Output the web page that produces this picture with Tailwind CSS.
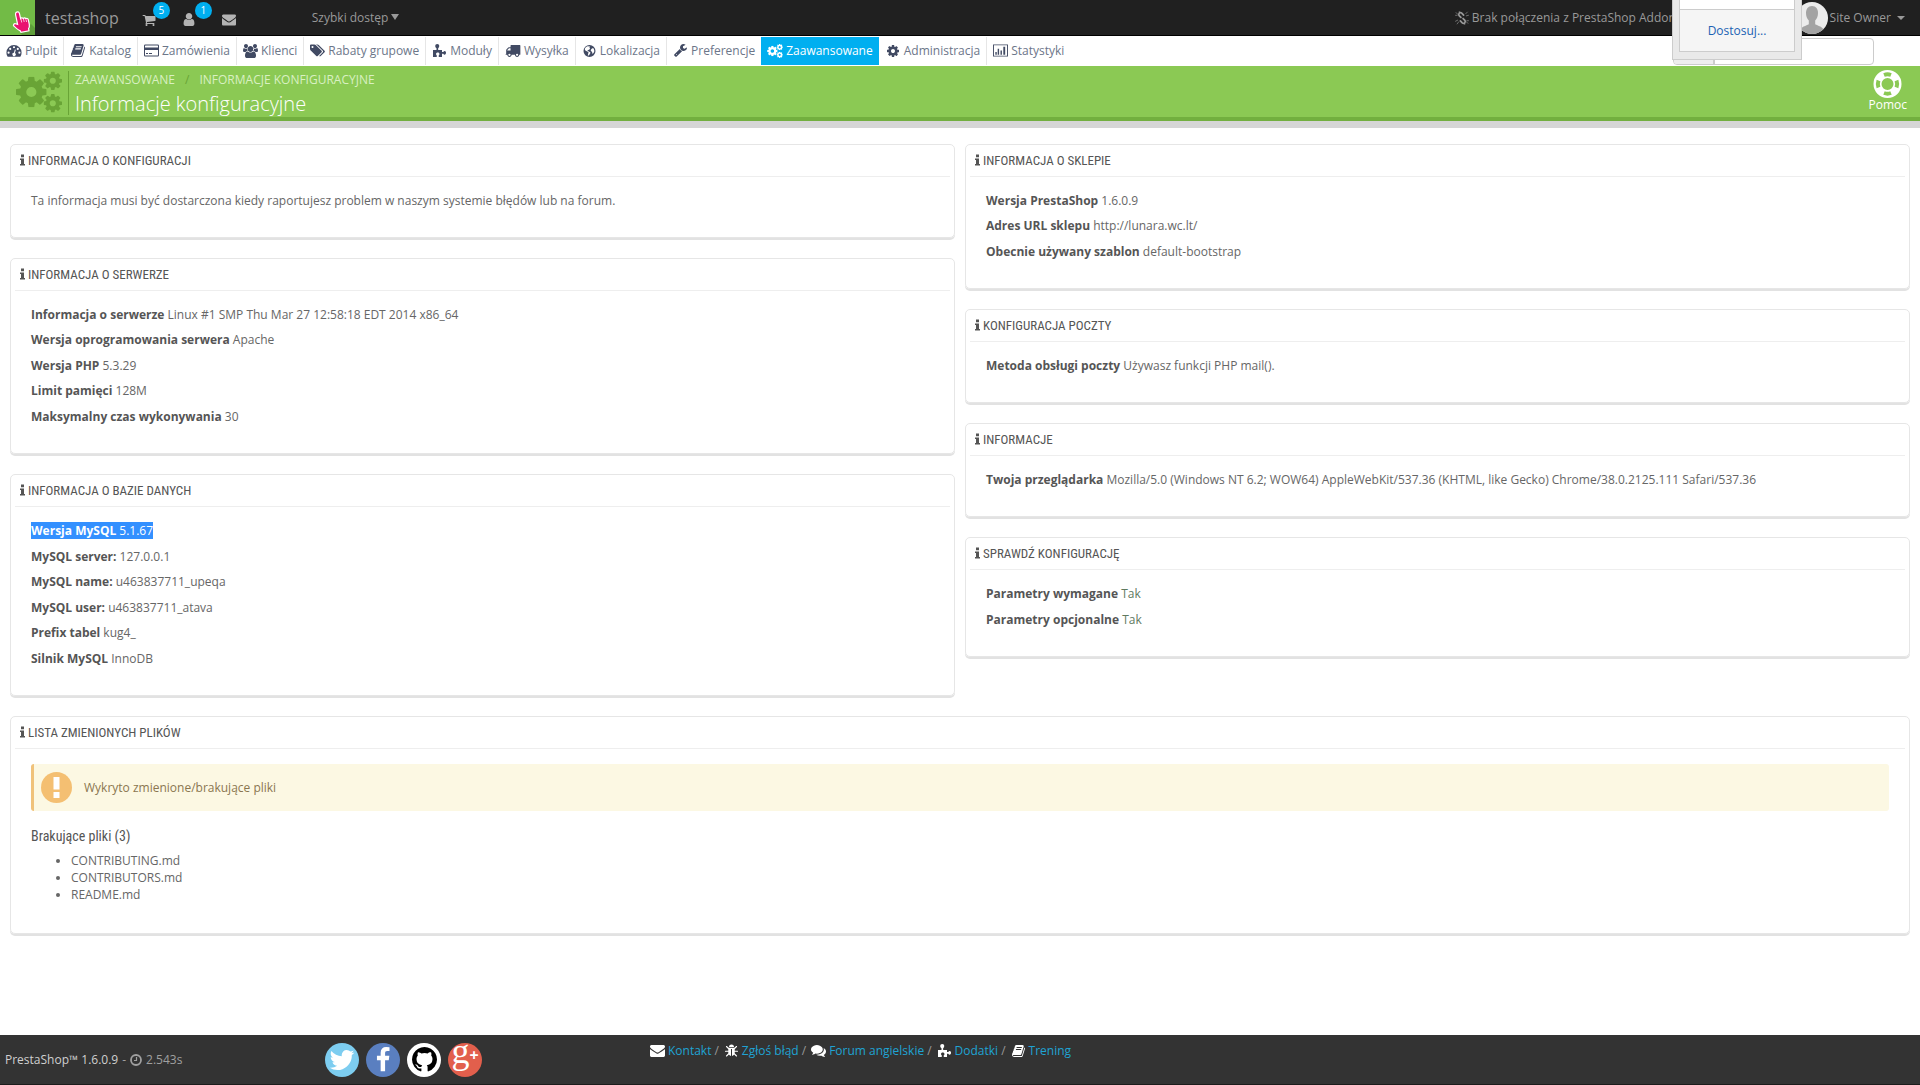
<!DOCTYPE html>
<html lang="pl">
<head>
    <meta charset="UTF-8">
    <meta name="viewport" content="width=device-width, initial-scale=1.0">
    <title>Informacje konfiguracyjne - testashop</title>
    <script src="https://cdn.jsdelivr.net/npm/@tailwindcss/browser@4"></script>
</head>
<body class="min-h-screen flex flex-col bg-white font-['Open_Sans',sans-serif] text-[12px] leading-[17px] text-[#666]">

    <!-- Icon sprite -->
    <svg class="hidden" xmlns="http://www.w3.org/2000/svg">
        <symbol id="i-cart" viewBox="0 0 1792 1792"><path d="M704 1536q0 52-38 90t-90 38-90-38-38-90 38-90 90-38 90 38 38 90zm896 0q0 52-38 90t-90 38-90-38-38-90 38-90 90-38 90 38 38 90zm128-1088v512q0 24-16.500 42.500t-40.500 21.500l-1044 122q13 60 13 70 0 16-24 64h920q26 0 45 19t19 45-19 45-45 19h-1024q-26 0-45-19t-19-45q0-11 8-31.500t16-36 21.500-40 15.500-29.500l-177-823h-204q-26 0-45-19t-19-45 19-45 45-19h256q16 0 28.500 6.500t19.500 15.500 13 24.500 8 26 5.500 29.500 4.500 26h1201q26 0 45 19t19 45z"/></symbol>
        <symbol id="i-user" viewBox="256 128 1280 1536"><path d="M1536 1399q0 109-62.500 187t-150.500 78h-854q-88 0-150.500-78t-62.500-187q0-85 8.500-160.500t31.500-152 58.500-131 94-89 134.500-34.500q131 128 313 128t313-128q76 0 134.500 34.500t94 89 58.500 131 31.500 152 8.500 160.500zm-256-887q0 159-112.500 271.500t-271.500 112.500-271.500-112.500-112.500-271.500 112.500-271.500 271.500-112.500 271.500 112.500 112.500 271.500z"/></symbol>
        <symbol id="i-envelope" viewBox="0 256 1792 1408"><path d="M1792 710v794q0 66-47 113t-113 47h-1472q-66 0-113-47t-47-113v-794q44 49 101 87 362 246 497 345 57 42 92.500 65.500t94.500 48 110 24.500h2q51 0 110-24.500t94.500-48 92.500-65.500q170-123 498-345 57-39 100-87zm0-294q0 79-49 151t-122 123q-376 261-468 325-10 7-42.500 31t-54 38.500-52 32.500-57.500 27-50 9h-2q-23 0-50-9t-57.500-27-52-32.500-54-38.500-42.500-31q-91-64-262-182.500t-205-142.500q-62-42-117-115.500t-55-136.500q0-78 41.500-130t118.500-52h1472q65 0 112.500 47t47.500 113z"/></symbol>
        <symbol id="i-dashboard" viewBox="0 0 28 24"><path fill-rule="evenodd" d="M14 2a14 14 0 0 1 14 14c0 2.500-.7 4.900-2 7q-.4.600-1 .600H3q-.6 0-1-.6a14 14 0 0 1-2-7A14 14 0 0 1 14 2zM4 14a2 2 0 1 0 0 4 2 2 0 0 0 0-4zm3-7a2 2 0 1 0 0 4 2 2 0 0 0 0-4zm7-3a2 2 0 1 0 0 4 2 2 0 0 0 0-4zm7 3a2 2 0 1 0 0 4 2 2 0 0 0 0-4zm3 7a2 2 0 1 0 0 4 2 2 0 0 0 0-4zm-8.500-3.700-1.600 6a3 3 0 1 0 1.900.5l1.600-6z"/></symbol>
        <symbol id="i-book" viewBox="0 128 1792 1536"><path d="M1703 478q40 57 18 129l-275 906q-19 64-76.500 107.500t-122.500 43.500h-923q-77 0-148.500-53.500t-99.500-131.500q-24-67-2-127 0-4 3-27t4-37q1-8-3-21.500t-3-19.500q2-11 8-21t16.500-23.500 16.500-23.500q23-38 45-91.500t30-91.500q3-10 .5-30t-.5-28q3-11 17-28t17-23q21-36 42-92t25-90q1-9-2.500-32t.5-28q4-13 22-30.500t22-22.500q19-26 42.500-84.500t27.500-96.500q1-8-3-25.500t-2-26.500q2-8 9-18t18-23 17-21q8-12 16.500-30.500t15-35 16-36 19.500-32 26.500-23.500 36-11.500 47.500 5.500l-1 3q38-9 51-9h761q74 0 114 56t18 130l-274 906q-36 119-71.500 153.500t-128.500 34.500h-869q-27 0-38 15-11 16-1 43 24 70 144 70h923q29 0 56-15.500t35-41.500l300-987q7-22 5-57 38 15 59 43zm-1064 2q-4 13 2 22.500t20 9.500h608q13 0 25.500-9.500t16.500-22.500l21-64q4-13-2-22.500t-20-9.500h-608q-13 0-25.500 9.500t-16.500 22.500zm-83 256q-4 13 2 22.500t20 9.500h608q13 0 25.500-9.500t16.500-22.500l21-64q4-13-2-22.500t-20-9.500h-608q-13 0-25.500 9.500t-16.500 22.500z"/></symbol>
        <symbol id="i-card" viewBox="0 0 30 24"><path fill-rule="evenodd" d="M2.500 0h25A2.500 2.500 0 0 1 30 2.500v19a2.500 2.500 0 0 1-2.500 2.500h-25A2.500 2.500 0 0 1 0 21.500v-19A2.500 2.500 0 0 1 2.500 0zM2 3v3h26V3q0-1-1-1H3Q2 2 2 3zm0 8v10q0 1 1 1h24q1 0 1-1V11zm2 6h4v2H4zm6 0h6v2h-6z"/></symbol>
        <symbol id="i-users" viewBox="0 128 1920 1536"><path d="M593 896q-162 5-265 128h-134q-82 0-138-40.500t-56-118.500q0-353 124-353 6 0 43.500 21t97.500 42.500 119 21.500q67 0 133-23-5 37-5 66 0 139 81 256zm1071 637q0 120-73 189.500t-194 69.500h-874q-121 0-194-69.500t-73-189.500q0-53 3.500-103.500t14-109 26.500-108.500 43-97.500 62-81 85.500-53.500 111.500-20q10 0 43 21.500t73 48 107 48 135 21.500 135-21.500 107-48 73-48 43-21.500q61 0 111.500 20t85.500 53.500 62 81 43 97.500 26.500 108.500 14 109 3.500 103.500zm-1024-1277q0 106-75 181t-181 75-181-75-75-181 75-181 181-75 181 75 75 181zm704 384q0 159-112.500 271.500t-271.500 112.500-271.500-112.500-112.500-271.500 112.500-271.500 271.500-112.500 271.500 112.500 112.500 271.500zm576 225q0 78-56 118.500t-138 40.500h-134q-103-123-265-128 81-117 81-256 0-29-5-66 66 23 133 23 59 0 119-21.500t97.500-42.500 43.500-21q124 0 124 353zm-128-609q0 106-75 181t-181 75-181-75-75-181 75-181 181-75 181 75 75 181z"/></symbol>
        <symbol id="i-tags" viewBox="0 128 1920 1536"><path d="M448 448q0-53-37.500-90.500t-90.500-37.500-90.500 37.500-37.500 90.500 37.500 90.500 90.500 37.500 90.500-37.500 37.500-90.500zm1067 576q0 53-37 90l-491 492q-39 37-91 37-53 0-90-37l-715-716q-38-37-64.500-101t-26.500-117v-416q0-52 38-90t90-38h416q53 0 117 26.500t102 64.500l715 714q37 39 37 91zm384 0q0 53-37 90l-491 492q-39 37-91 37-36 0-59-14t-53-45l470-470q37-37 37-90 0-52-37-91l-715-714q-38-38-102-64.500t-117-26.500h224q53 0 117 26.500t102 64.500l715 714q37 39 37 91z"/></symbol>
        <symbol id="i-puzzle" viewBox="0 0 26 26"><path d="M0 12h7V8.500C5.300 7.500 4.500 6 4.500 4.200 4.500 1.800 6 0 8.500 0s4 1.800 4 4.200c0 1.800-.8 3.300-2.200 4.300V12H18v4.200h2.600c.7-1.400 1.600-2 2.800-2 1.600 0 2.600 1.500 2.600 3.500s-1 3.600-2.600 3.600c-1.200 0-2.200-.7-2.800-2H18V26h-6.500v-3.500c1-.5 1.500-1.400 1.500-2.500 0-1.800-1.500-3-3.500-3S6 18.200 6 20c0 1.100.5 2 1.500 2.500V26H0z"/></symbol>
        <symbol id="i-truck" viewBox="64 256 1728 1408"><path d="M640 1408q0-52-38-90t-90-38-90 38-38 90 38 90 90 38 90-38 38-90zm-384-512h384v-256h-158q-13 0-22 9l-195 195q-9 9-9 22v30zm1280 512q0-52-38-90t-90-38-90 38-38 90 38 90 90 38 90-38 38-90zm256-1088v1024q0 15-4 26.500t-13.500 18.500-16.500 11.500-23.500 6-22.500 2-25.500 0-22.500-.5q0 106-75 181t-181 75-181-75-75-181h-384q0 106-75 181t-181 75-181-75-75-181h-64q-3 0-22.500.5t-25.500 0-22.500-2-23.500-6-16.500-11.500-13.500-18.500-4-26.500q0-26 19-45t45-19v-320q0-8-.5-35t0-38 2.500-34.500 6.500-37 14-30.500 22.500-30l198-198q19-19 50.500-32t58.500-13h160v-192q0-26 19-45t45-19h1024q26 0 45 19t19 45z"/></symbol>
        <symbol id="i-globe" viewBox="0 0 24 24"><path fill-rule="evenodd" d="M12 0a12 12 0 1 1 0 24 12 12 0 0 1 0-24zM8 2.500C5.500 3.500 3.500 5.300 2.600 8c.2 2 1.200 3.500 3 4.200l3 1.300c1.800.8 1.500 2 .8 3.300l-.8 4.200c2 1 3.400-1.700 4.400-3.400 1-1.800 1.200-3-.5-3.800l-3.800-1.800c-1-.5-.7-1.800.6-2l2-.5 1.800-2.300-1.200-2 1.300-2.200zM15 9l-.5 3 2.500 1.500 1 4.500c2.300-1.500 3.500-4 3.600-6.500-.2-2-1-4.200-2.300-5.500L17 7z"/></symbol>
        <symbol id="i-wrench" viewBox="64 128 1664 1664"><path d="M448 1472q0-26-19-45t-45-19-45 19-19 45 19 45 45 19 45-19 19-45zm644-420l-682 682q-37 37-90 37-52 0-91-37l-106-108q-38-36-38-90 0-53 38-91l681-681q39 98 114.500 173.500t173.500 114.500zm634-435q0 39-23 106-47 134-164.500 217.500t-258.500 83.500q-185 0-316.500-131.500t-131.500-316.500 131.500-316.500 316.500-131.500q58 0 121.500 16.500t107.500 46.500q16 11 16 28t-16 28l-293 169v224l193 107q5-3 79-48.500t135.500-81 70.500-35.500q15 0 23.500 10t8.500 25z"/></symbol>
        <symbol id="i-cog" viewBox="128 128 1536 1536"><path d="M1152 896q0-106-75-181t-181-75-181 75-75 181 75 181 181 75 181-75 75-181zm512-109v222q0 12-8 23t-20 13l-185 28q-19 54-39 91 35 50 107 138 10 12 10 25t-9 23q-27 37-99 108t-94 71q-12 0-26-9l-138-108q-44 23-91 38-16 136-29 186-7 28-36 28h-222q-14 0-24.500-8.500t-11.500-21.500l-28-184q-49-16-90-37l-141 107q-10 9-25 9-14 0-25-11-126-114-165-168-7-10-7-23 0-12 8-23 15-21 51-66.500t54-70.500q-27-50-41-99l-183-27q-13-2-21-12.500t-8-23.500v-222q0-12 8-23t19-13l186-28q14-46 39-92-40-57-107-138-10-12-10-24 0-10 9-23 26-36 98.500-107.500t94.500-71.500q13 0 26 10l138 107q44-23 91-38 16-136 29-186 7-28 36-28h222q14 0 24.500 8.500t11.500 21.500l28 184q49 16 90 37l142-107q9-9 24-9 13 0 25 10 129 119 165 170 7 8 7 22 0 12-8 23-15 21-51 66.500t-54 70.500q26 50 41 98l183 28q13 2 21 12.500t8 23.500z"/></symbol>
        <symbol id="i-cogs" viewBox="0 0 45 40">
            <use href="#i-cog" x="0" y="5" width="30" height="30"/>
            <use href="#i-cog" x="27" y="0" width="18" height="18"/>
            <use href="#i-cog" x="27" y="22" width="18" height="18"/>
        </symbol>
        <symbol id="i-chart" viewBox="0 0 32 26"><path fill-rule="evenodd" d="M0 0h32v26H0zm2 2v22h28V2zm3 14h3v6H5zm5-7h3v13h-3zm6 4h3v9h-3zm6-8h4v17h-4z"/></symbol>
        <symbol id="i-info" viewBox="0 0 10 22"><path d="M2 0h6v5.500H2zM0 8h8v11h2v3H0v-3h2v-8H0z"/></symbol>
        <symbol id="i-unlink" viewBox="0 0 26 26"><g fill="none" stroke="currentColor" stroke-width="3.200" stroke-linecap="round"><path d="M11 12 8 9c-3-3 1-8 4.500-5L16 7.500M15 14l3 3c3 3-1 8-4.500 5L10 18.500"/></g><g fill="none" stroke="currentColor" stroke-width="1.200" stroke-linecap="round"><path d="M1 8h3M2 3l3 3M8 0v3M25 18h-3M24 23l-3-3M18 26v-3M20 5l3-3M21 9l4-1M5 17l-4 2M7 20l-3 4"/></g></symbol>
        <symbol id="i-ring" viewBox="0 0 28 28"><path fill-rule="evenodd" d="M14 0a14 14 0 1 1 0 28 14 14 0 0 1 0-28zm0 8a6 6 0 1 0 0 12 6 6 0 0 0 0-12z"/><g fill="none" stroke="#8bc954" stroke-width="4"><path d="M10.500 5a10 10 0 0 1 7 0M10.500 23a10 10 0 0 0 7 0M5 10.500a10 10 0 0 0 0 7M23 10.500a10 10 0 0 1 0 7"/></g></symbol>
        <symbol id="i-clock" viewBox="0 0 24 24"><g fill="none" stroke="currentColor" stroke-width="3.600"><circle cx="12" cy="12" r="10"/><path d="M13 6v7H8" stroke-width="2.400"/></g></symbol>
        <symbol id="i-bug" viewBox="0 0 26 26"><path d="M8 6a5 5 0 0 1 10 0z"/><path d="M6.500 7.500h13v9c0 4-2.500 7-5.500 7.500V10h-2v14c-3-.5-5.500-3.500-5.500-7.500z"/><path d="M3 5l4 4M23 5l-4 4M1 14.500h6M25 14.500h-6M3 24l4.500-4.500M23 24l-4.500-4.500" fill="none" stroke="currentColor" stroke-width="2.200" stroke-linecap="round"/></symbol>
        <symbol id="i-comments" viewBox="0 256 1792 1408"><path d="M1408 768q0 139-94 257t-256.500 186.500-353.500 68.500q-86 0-176-16-124 88-278 128-36 9-86 16h-3q-11 0-20.500-8t-11.500-21q-1-3-1-6.500t.5-6.500 2-6l2.500-5 3.500-5.500 4-5 4.500-5 4-4.500q5-6 23-25t26-29.500 22.500-29 25-38.500 20.500-44q-124-72-195-177t-71-224q0-139 94-257t256.500-186.500 353.500-68.500 353.500 68.500 256.500 186.500 94 257zm384 256q0 120-71 224.500t-195 176.500q10 24 20.500 44t25 38.500 22.500 29 26 29.500 23 25q1 1 4 4.500t4.500 5 4 5 3.500 5.500l2.500 5 2 6 .5 6.500-1 6.500q-3 14-13 22t-22 7q-50-7-86-16-154-40-278-128-90 16-176 16-271 0-472-132 58 4 88 4 161 0 309-45t264-129q125-92 192-212t67-254q0-77-23-152 129 71 204 178t75 230z"/></symbol>
        <symbol id="i-twitter" viewBox="0 0 1792 1792"><path d="M1684 408q-67 98-162 167 1 14 1 42 0 130-38 259.500t-115.500 248.500-184.500 210.500-258 146-323 54.500q-271 0-496-145 35 4 78 4 225 0 401-138-105-2-188-64.500t-114-159.500q33 5 61 5 43 0 85-11-112-23-185.500-111.500t-73.500-205.500v-4q68 38 146 41-66-44-105-115t-39-154q0-88 44-163 121 149 294.500 238.500t371.500 99.500q-8-38-8-74 0-134 94.500-228.500t228.500-94.500q140 0 236 102 109-21 205-78-37 115-142 178 93-10 186-50z"/></symbol>
        <symbol id="i-facebook" viewBox="0 0 1792 1792"><path d="M1343 12v264h-157q-86 0-116 36t-30 108v189h293l-39 296h-254v759h-306v-759h-255v-296h255v-218q0-186 104-288.500t277-102.500q147 0 228 12z"/></symbol>
        <symbol id="i-github" viewBox="128 128 1536 1536"><path d="M896 128q209 0 385.500 103t279.500 279.500 103 385.500q0 251-146.500 451.500t-378.500 277.500q-27 5-40-7t-13-30q0-3 .5-76.500t.5-134.500q0-97-52-142 57-6 102.500-18t94-39 81-66.500 53-105 20.500-150.500q0-119-79-206 37-91-8-204-28-9-81 11t-92 44l-38 24q-93-26-192-26t-192 26q-16-11-42.500-27t-83.500-38.500-85-13.500q-45 113-8 204-79 87-79 206 0 85 20.500 150t52.500 105 80.500 67 94 39 102.500 18q-39 36-49 103-21 10-45 15t-57 5-65.500-21.500-55.500-62.500q-19-32-48.500-52t-49.500-24l-20-3q-21 0-29 4.500t-5 11.500 9 14 13 12l7 5q22 10 43.500 38t31.500 51l10 23q13 38 44 61.500t67 30 69.500 7 55.500-3.500l23-4q0 38 .5 88.500t.5 54.500q0 18-13 30t-40 7q-232-77-378.500-277.500t-146.500-451.500q0-209 103-385.500t279.500-279.500 385.500-103z"/></symbol>
    </svg>

    <!-- Top bar -->
    <header class="relative z-10 flex items-center justify-between h-9 bg-[#202020] border-b border-black text-[#999] fill-current">
        <div class="flex items-center h-full">
            <a href="#" class="w-[35px] h-full bg-[#72bb46]" aria-label="Panel">
                <svg class="w-[35px] h-[35px]" viewBox="0 0 35 35">
                    <path d="M20 33l11-9 4 4v7H22z" fill="#5f9e3a"/>
                    <path d="M16 12.500c1.400-1.200 3-.7 3.400.8l1.200 5.200c.5-.8 2-.9 2.600 0 .7-.8 2-.8 2.600.2 1-.6 2.200-.1 2.500 1l1 4.600c.3 1.800 0 3-.7 4.200l.4 2.300-8 1.500-1-1.700c-1.600-.3-3.400-2-6-4.400-1.300-1.200 0-3 1.600-2.500l2 .7-2-9.500c-.2-1 0-1.800.4-2.400z" fill="#e9126f" stroke="#fff" stroke-width="1.200"/>
                    <path d="M21 19l.7 3.500M23.500 19l.7 3M26 19.500l.6 2.500" stroke="#fff" stroke-width=".7" fill="none"/>
                </svg>
            </a>
            <a href="#" class="ml-[10px] text-[16px] leading-6">testashop</a>
            <nav class="flex items-center ml-[23px] gap-[27px] text-[#b3b3b3]">
                <a href="#" class="relative" aria-label="Zamówienia">
                    <svg class="w-[14px] h-[14px] mt-1"><use href="#i-cart"/></svg>
                    <span class="absolute -top-[7px] left-[11px] w-[17px] h-[17px] rounded-full bg-[#00aff0] text-white text-[10px] text-center">5</span>
                </a>
                <a href="#" class="relative" aria-label="Klienci">
                    <svg class="w-[12px] h-[13px] mt-1"><use href="#i-user"/></svg>
                    <span class="absolute -top-[7px] left-[12px] w-[17px] h-[17px] rounded-full bg-[#00aff0] text-white text-[10px] text-center">1</span>
                </a>
                <a href="#" aria-label="Wiadomości"><svg class="w-[14px] h-[12px] mt-1"><use href="#i-envelope"/></svg></a>
            </nav>
            <button type="button" class="flex items-center gap-[3px] ml-[76px]">
                Szybki dostęp
                <span class="mb-0.5 border-x-4 border-x-transparent border-t-[6px] border-t-current"></span>
            </button>
        </div>
        <div class="flex items-center pr-[15px]">
            <a href="#" class="flex items-center gap-[3px] mr-[114px]">
                <svg class="w-[14px] h-[14px]"><use href="#i-unlink"/></svg>
                Brak połączenia z PrestaShop Addons
            </a>
            <button type="button" class="flex items-center gap-0.5">
                <svg class="w-8 h-8 rounded-full bg-[#ececec]" viewBox="0 0 32 32"><path d="M16 4c4 0 6 3 6 7 0 3-1 6-2.800 7.500V22c0 1 6.800 2 8.800 6v4H4v-4c2-4 8.800-5 8.800-6v-3.500C11 17 10 14 10 11c0-4 2-7 6-7z" fill="#a3a3a3"/></svg>
                Site Owner
                <span class="ml-1 border-x-4 border-x-transparent border-t-4 border-t-current"></span>
            </button>
        </div>

        <!-- Floating panel -->
        <div class="absolute top-0 right-[118px] w-[130px] h-[60px] px-[6px] pb-[7px] bg-[#e9e9e9] border border-t-0 border-[#ccc]">
            <div class="flex flex-col h-full border border-t-0 border-[#ccc] bg-[#f5f5f5]">
                <div class="h-[10px] bg-white border-b border-[#ccc]"></div>
                <a href="#" class="grow flex items-center justify-center text-[#1b62b3]">Dostosuj...</a>
            </div>
        </div>
    </header>

    <!-- Main menu -->
    <div class="flex items-center justify-between h-[30px] text-[#6c7689]">
        <nav class="flex h-7 fill-[#414a63]">
            <a href="#" class="flex items-center gap-[3px] px-[6px] pb-px border-r border-[#e6e6e6]"><svg class="w-4 h-[13px]"><use href="#i-dashboard"/></svg>Pulpit</a>
            <a href="#" class="flex items-center gap-[3px] px-[6px] pb-px border-r border-[#e6e6e6]"><svg class="w-4 h-[13px]"><use href="#i-book"/></svg>Katalog</a>
            <a href="#" class="flex items-center gap-[3px] px-[6px] pb-px border-r border-[#e6e6e6]"><svg class="w-[15px] h-[13px]"><use href="#i-card"/></svg>Zamówienia</a>
            <a href="#" class="flex items-center gap-[3px] px-[6px] pb-px border-r border-[#e6e6e6]"><svg class="w-[15px] h-[14px]"><use href="#i-users"/></svg>Klienci</a>
            <a href="#" class="flex items-center gap-[3px] px-[6px] pb-px border-r border-[#e6e6e6]"><svg class="w-[15px] h-[13px]"><use href="#i-tags"/></svg>Rabaty grupowe</a>
            <a href="#" class="flex items-center gap-[3px] px-[6px] pb-px border-r border-[#e6e6e6]"><svg class="w-[15px] h-[13px]"><use href="#i-puzzle"/></svg>Moduły</a>
            <a href="#" class="flex items-center gap-[3px] px-[6px] pb-px border-r border-[#e6e6e6]"><svg class="w-4 h-[12px]"><use href="#i-truck"/></svg>Wysyłka</a>
            <a href="#" class="flex items-center gap-[3px] px-[6px] pb-px border-r border-[#e6e6e6]"><svg class="w-[15px] h-[12px]"><use href="#i-globe"/></svg>Lokalizacja</a>
            <a href="#" class="flex items-center gap-[3px] px-[6px] pb-px"><svg class="w-[15px] h-[13px]"><use href="#i-wrench"/></svg>Preferencje</a>
            <a href="#" class="flex items-center gap-[3px] px-[6px] pb-px bg-[#00aff0] text-white fill-white"><svg class="w-4 h-[14px]"><use href="#i-cogs"/></svg>Zaawansowane</a>
            <a href="#" class="flex items-center gap-[3px] px-[6px] pb-px border-r border-[#e6e6e6]"><svg class="w-4 h-[12px]"><use href="#i-cog"/></svg>Administracja</a>
            <a href="#" class="flex items-center gap-[3px] px-[6px] pb-px"><svg class="w-[15px] h-[13px]"><use href="#i-chart"/></svg>Statystyki</a>
        </nav>
        <form class="flex w-[201px] h-[27px] mr-[46px] border border-[#ccc] rounded-sm overflow-hidden">
            <button type="button" class="w-[44px] bg-[#eee] border-r-2 border-[#ccc]" aria-label="Szukaj wszędzie"></button>
            <input type="text" class="grow min-w-0 px-2 focus:outline-none" aria-label="Szukaj">
        </form>
    </div>

    <!-- Page head -->
    <div class="flex justify-between h-[55px] bg-[#8bc954] border-b-4 border-[#72af3f]">
        <div class="flex items-start pl-[16px] pt-[5px]">
            <svg class="w-[46px] h-[42px] fill-[#69a436]"><use href="#i-cogs"/></svg>
            <div class="ml-[6px] pl-[6px] border-l border-[#69a436]">
                <ul class="flex uppercase text-[#d9f0c2]">
                    <li>Zaawansowane</li>
                    <li class="px-[10px] text-[#69a436]">/</li>
                    <li>Informacje konfiguracyjne</li>
                </ul>
                <h2 class="mt-[5px] text-[20px] leading-[22px] font-light text-white">Informacje konfiguracyjne</h2>
            </div>
        </div>
        <a href="#" class="flex flex-col items-center pt-1 pr-[13px] leading-[14px] text-white fill-white">
            <svg class="w-[29px] h-[28px]"><use href="#i-ring"/></svg>
            Pomoc
        </a>
    </div>
    <div class="h-[7px] bg-[#d6d6d6]"></div>

    <!-- Content -->
    <main class="grow px-[10px] pt-4">
        <div class="grid grid-cols-2 gap-x-[10px] items-start">
            <div>
                <section class="mb-5 px-1 pb-5 border border-[#e6e6e6] rounded-[5px] shadow-[0_2px_0_#e2e2e2]">
                    <h3 class="flex items-center gap-[3px] h-8 px-[5px] border-b border-[#eee] font-['Ubuntu_Condensed','Roboto_Condensed',sans-serif] font-normal text-[13px] uppercase text-[#555] fill-current"><svg class="w-[5px] h-3 mb-0.5"><use href="#i-info"/></svg>Informacja o konfiguracji</h3>
                    <div class="px-4 pt-[15px]">
                        <p class="mb-2">Ta informacja musi być dostarczona kiedy raportujesz problem w naszym systemie błędów lub na forum.</p>
                    </div>
                </section>

                <section class="mb-5 px-1 pb-5 border border-[#e6e6e6] rounded-[5px] shadow-[0_2px_0_#e2e2e2]">
                    <h3 class="flex items-center gap-[3px] h-8 px-[5px] border-b border-[#eee] font-['Ubuntu_Condensed','Roboto_Condensed',sans-serif] font-normal text-[13px] uppercase text-[#555] fill-current"><svg class="w-[5px] h-3 mb-0.5"><use href="#i-info"/></svg>Informacja o serwerze</h3>
                    <div class="px-4 pt-[15px]">
                        <p class="mb-2 even:mb-[9px]"><strong class="text-[#555]">Informacja o serwerze</strong> Linux #1 SMP Thu Mar 27 12:58:18 EDT 2014 x86_64</p>
                        <p class="mb-2 even:mb-[9px]"><strong class="text-[#555]">Wersja oprogramowania serwera</strong> Apache</p>
                        <p class="mb-2 even:mb-[9px]"><strong class="text-[#555]">Wersja PHP</strong> 5.3.29</p>
                        <p class="mb-2 even:mb-[9px]"><strong class="text-[#555]">Limit pamięci</strong> 128M</p>
                        <p class="mb-2 even:mb-[9px]"><strong class="text-[#555]">Maksymalny czas wykonywania</strong> 30</p>
                    </div>
                </section>

                <section class="mb-5 px-1 pb-5 border border-[#e6e6e6] rounded-[5px] shadow-[0_2px_0_#e2e2e2]">
                    <h3 class="flex items-center gap-[3px] h-8 px-[5px] border-b border-[#eee] font-['Ubuntu_Condensed','Roboto_Condensed',sans-serif] font-normal text-[13px] uppercase text-[#555] fill-current"><svg class="w-[5px] h-3 mb-0.5"><use href="#i-info"/></svg>Informacja o bazie danych</h3>
                    <div class="px-4 pt-[15px]">
                        <p class="mb-[9px] even:mb-2"><mark class="inline-block bg-[#3390ff] text-white"><strong>Wersja MySQL</strong> 5.1.67</mark></p>
                        <p class="mb-[9px] even:mb-2"><strong class="text-[#555]">MySQL server:</strong> 127.0.0.1</p>
                        <p class="mb-[9px] even:mb-2"><strong class="text-[#555]">MySQL name:</strong> u463837711_upeqa</p>
                        <p class="mb-[9px] even:mb-2"><strong class="text-[#555]">MySQL user:</strong> u463837711_atava</p>
                        <p class="mb-[9px] even:mb-2"><strong class="text-[#555]">Prefix tabel</strong> kug4_</p>
                        <p class="mb-[9px] even:mb-2"><strong class="text-[#555]">Silnik MySQL</strong> InnoDB</p>
                    </div>
                </section>
            </div>

            <div>
                <section class="mb-5 px-1 pb-5 border border-[#e6e6e6] rounded-[5px] shadow-[0_2px_0_#e2e2e2]">
                    <h3 class="flex items-center gap-[3px] h-8 px-[5px] border-b border-[#eee] font-['Ubuntu_Condensed','Roboto_Condensed',sans-serif] font-normal text-[13px] uppercase text-[#555] fill-current"><svg class="w-[5px] h-3 mb-0.5"><use href="#i-info"/></svg>Informacja o sklepie</h3>
                    <div class="px-4 pt-[15px]">
                        <p class="mb-2 even:mb-[9px]"><strong class="text-[#555]">Wersja PrestaShop</strong> 1.6.0.9</p>
                        <p class="mb-2 even:mb-[9px]"><strong class="text-[#555]">Adres URL sklepu</strong> http://lunara.wc.lt/</p>
                        <p class="mb-2 even:mb-[9px]"><strong class="text-[#555]">Obecnie używany szablon</strong> default-bootstrap</p>
                    </div>
                </section>

                <section class="mb-5 px-1 pb-5 border border-[#e6e6e6] rounded-[5px] shadow-[0_2px_0_#e2e2e2]">
                    <h3 class="flex items-center gap-[3px] h-8 px-[5px] border-b border-[#eee] font-['Ubuntu_Condensed','Roboto_Condensed',sans-serif] font-normal text-[13px] uppercase text-[#555] fill-current"><svg class="w-[5px] h-3 mb-0.5"><use href="#i-info"/></svg>Konfiguracja poczty</h3>
                    <div class="px-4 pt-[15px]">
                        <p class="mb-2"><strong class="text-[#555]">Metoda obsługi poczty</strong> Używasz funkcji PHP mail().</p>
                    </div>
                </section>

                <section class="mb-5 px-1 pb-5 border border-[#e6e6e6] rounded-[5px] shadow-[0_2px_0_#e2e2e2]">
                    <h3 class="flex items-center gap-[3px] h-8 px-[5px] border-b border-[#eee] font-['Ubuntu_Condensed','Roboto_Condensed',sans-serif] font-normal text-[13px] uppercase text-[#555] fill-current"><svg class="w-[5px] h-3 mb-0.5"><use href="#i-info"/></svg>Informacje</h3>
                    <div class="px-4 pt-[15px]">
                        <p class="mb-2"><strong class="text-[#555]">Twoja przeglądarka</strong> Mozilla/5.0 (Windows NT 6.2; WOW64) AppleWebKit/537.36 (KHTML, like Gecko) Chrome/38.0.2125.111 Safari/537.36</p>
                    </div>
                </section>

                <section class="mb-5 px-1 pb-5 border border-[#e6e6e6] rounded-[5px] shadow-[0_2px_0_#e2e2e2]">
                    <h3 class="flex items-center gap-[3px] h-8 px-[5px] border-b border-[#eee] font-['Ubuntu_Condensed','Roboto_Condensed',sans-serif] font-normal text-[13px] uppercase text-[#555] fill-current"><svg class="w-[5px] h-3 mb-0.5"><use href="#i-info"/></svg>Sprawdź konfigurację</h3>
                    <div class="px-4 pt-[15px]">
                        <p class="mb-[9px] even:mb-2"><strong class="text-[#555]">Parametry wymagane</strong> <span class="text-[#5f7a5f]">Tak</span></p>
                        <p class="mb-[9px] even:mb-2"><strong class="text-[#555]">Parametry opcjonalne</strong> <span class="text-[#5f7a5f]">Tak</span></p>
                    </div>
                </section>
            </div>
        </div>

        <!-- Changed files -->
        <section class="mb-5 px-1 pb-[22px] border border-[#e6e6e6] rounded-[5px] shadow-[0_2px_0_#e2e2e2]">
            <h3 class="flex items-center gap-[3px] h-8 px-[5px] border-b border-[#eee] font-['Ubuntu_Condensed','Roboto_Condensed',sans-serif] font-normal text-[13px] uppercase text-[#555] fill-current"><svg class="w-[5px] h-3 mb-0.5"><use href="#i-info"/></svg>Lista zmienionych plików</h3>
            <div class="px-4 pt-[15px]">
                <div class="flex items-center gap-3 h-[47px] pl-[7px] mb-[17px] bg-[#fcf8e3] border-l-3 border-[#f0c27b] rounded-[3px] text-[#8a7650]">
                    <svg class="w-[31px] h-[31px]" viewBox="0 0 31 31"><circle cx="15.500" cy="15.500" r="15.500" fill="#f4bf72"/><path d="M12.500 5h6v12.500h-6zM12.500 20h6v6h-6z" fill="#fff"/></svg>
                    Wykryto zmienione/brakujące pliki
                </div>
                <h4 class="mb-[7px] font-['Ubuntu_Condensed','Roboto_Condensed',sans-serif] font-normal text-[14px] text-[#555]">Brakujące pliki (3)</h4>
                <ul class="pl-10 mb-2 list-disc">
                    <li>CONTRIBUTING.md</li>
                    <li>CONTRIBUTORS.md</li>
                    <li>README.md</li>
                </ul>
            </div>
        </section>
    </main>

    <!-- Footer -->
    <footer class="grid grid-cols-12 h-[50px] bg-[#333] border-b border-[#1c1c1c] text-[#a0a0a0]">
        <div class="col-span-2 flex items-center gap-1 pl-[5px]">
            <span class="text-[#d0d0d0]">PrestaShop™ 1.6.0.9</span> -
            <svg class="w-3 h-3"><use href="#i-clock"/></svg>
            2.543s
        </div>
        <div class="col-span-2 flex items-center gap-[7px] pl-[5px]">
            <a href="#" aria-label="Twitter" class="flex items-center justify-center w-[34px] h-[34px] rounded-full bg-[#7dcdf0] fill-white"><svg class="w-[28px] h-[28px]"><use href="#i-twitter"/></svg></a>
            <a href="#" aria-label="Facebook" class="flex items-center justify-center w-[34px] h-[34px] rounded-full bg-[#5a7fc0] fill-white"><svg class="w-[26px] h-[26px]"><use href="#i-facebook"/></svg></a>
            <a href="#" aria-label="Github" class="flex items-center justify-center w-[34px] h-[34px] rounded-full bg-white fill-black"><svg class="w-[25px] h-[25px]"><use href="#i-github"/></svg></a>
            <a href="#" aria-label="Google+" class="flex items-center justify-center w-[34px] h-[34px] rounded-full bg-[#e25f4c] text-white"><span class="pb-[18px] font-['Liberation_Serif',serif] text-[36px] leading-4">g</span><span class="pb-2 font-bold text-[16px]">+</span></a>
        </div>
        <ul class="col-span-8 flex gap-[5px] pl-[10px] pt-[7px] text-[#1fa3d4] fill-white">
            <li class="flex items-center h-[17px] gap-[3px]"><svg class="w-[15px] h-3"><use href="#i-envelope"/></svg><a href="#">Kontakt</a><span class="text-[#999]">/</span></li>
            <li class="flex items-center h-[17px] gap-[3px] text-white"><svg class="w-[15px] h-[13px]"><use href="#i-bug"/></svg><a href="#" class="text-[#1fa3d4]">Zgłoś błąd</a><span class="text-[#999]">/</span></li>
            <li class="flex items-center h-[17px] gap-[3px]"><svg class="w-[15px] h-3"><use href="#i-comments"/></svg><a href="#">Forum angielskie</a><span class="text-[#999]">/</span></li>
            <li class="flex items-center h-[17px] gap-[3px]"><svg class="w-[15px] h-[13px]"><use href="#i-puzzle"/></svg><a href="#">Dodatki</a><span class="text-[#999]">/</span></li>
            <li class="flex items-center h-[17px] gap-[3px]"><svg class="w-[15px] h-3"><use href="#i-book"/></svg><a href="#">Trening</a></li>
        </ul>
    </footer>
</body>
</html>
